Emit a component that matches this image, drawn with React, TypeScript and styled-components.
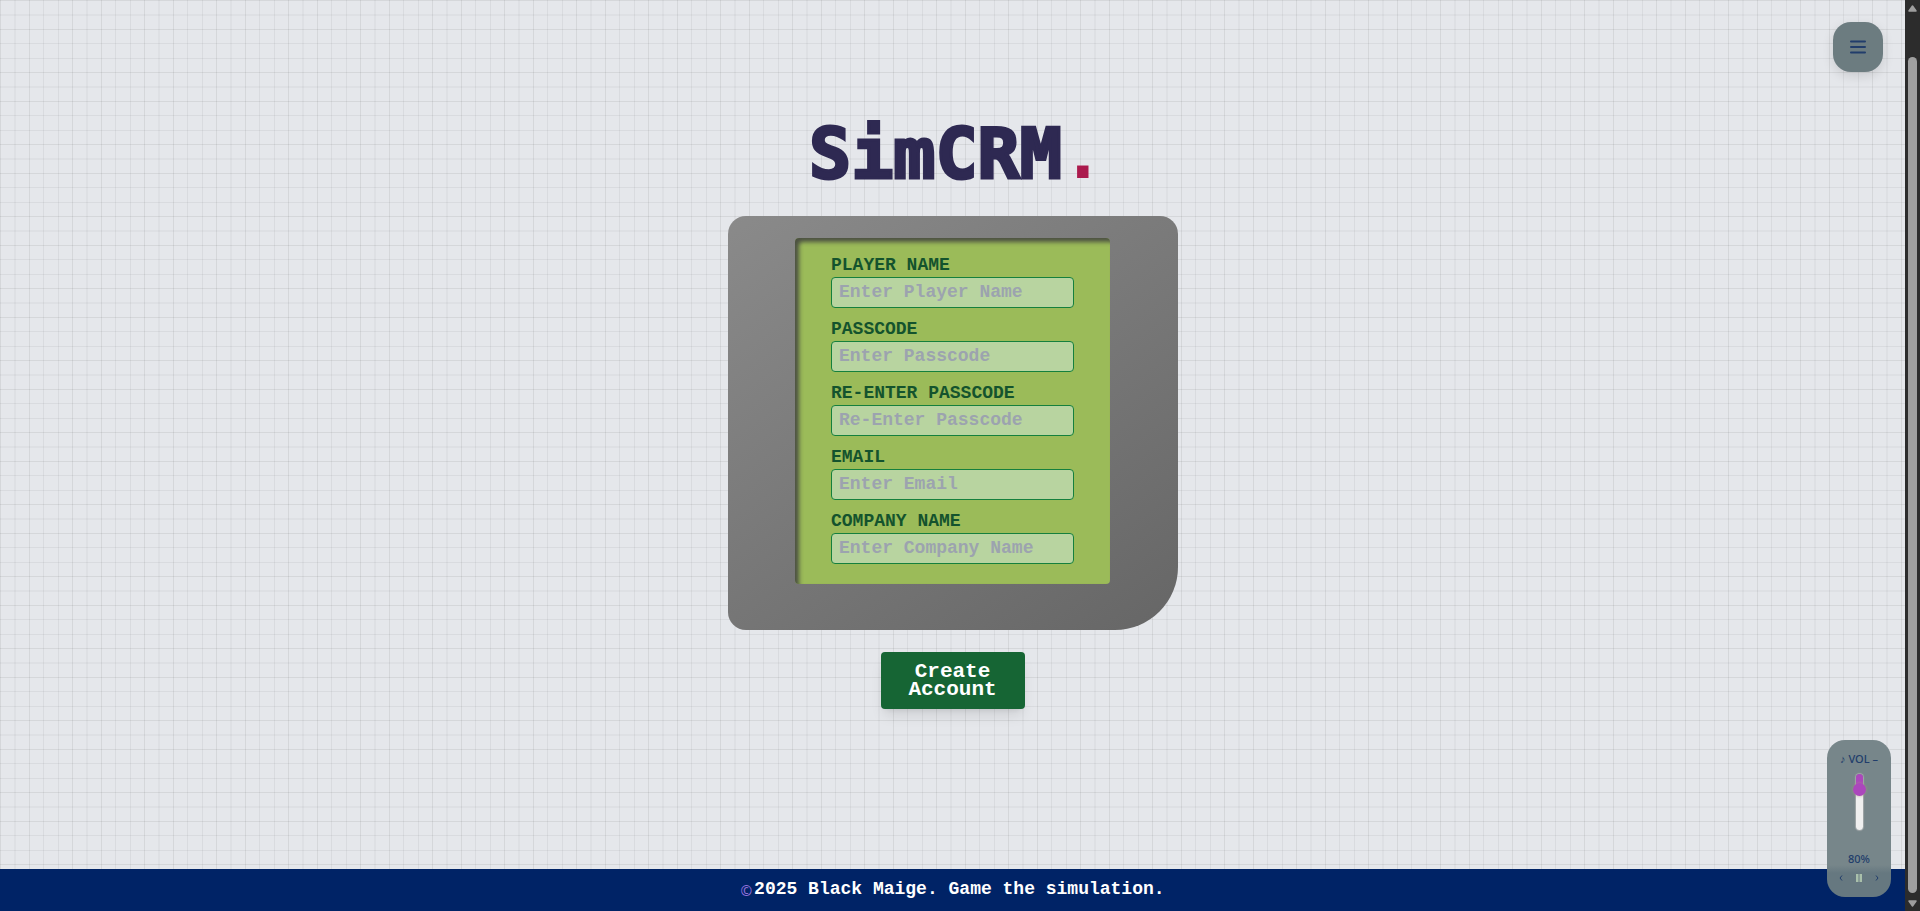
import React, { useState } from "react";
import styled, { createGlobalStyle } from "styled-components";

const GlobalStyle = createGlobalStyle`
  *, *::before, *::after { box-sizing: border-box; }
  body { margin: 0; background: #e5e7eb; }
  button, input { font: inherit; }
`;

const mono = `"Liberation Mono", "DejaVu Sans Mono", monospace`;
const sans = `"Noto Sans", "Open Sans", sans-serif`;

const line = "rgba(0, 0, 0, 0.07)";
const softLine = "rgba(0, 0, 0, 0.05)";
const gridStops = `
  ${line} 0 1px, transparent 1px 14px,
  rgba(0, 0, 0, 0.03) 14px 16px, transparent 16px 29px,
  ${line} 29px 30px, transparent 30px 43px,
  ${softLine} 43px 44px, transparent 44px 58px,
  ${softLine} 58px 59px, transparent 59px 72px`;

const Shell = styled.div`
  display: flex;
  height: 100vh;
`;

const Page = styled.div`
  position: relative;
  flex: 1;
  min-width: 0;
  display: flex;
  flex-direction: column;
  font-family: ${mono};
  background:
    linear-gradient(to right, ${gridStops}) 0 0 / 72px 72px,
    linear-gradient(to bottom, ${gridStops}) 0 0 / 72px 72px,
    #e5e7eb;
`;

const Main = styled.main`
  flex: 1;
  display: flex;
  flex-direction: column;
  align-items: center;
  padding-top: 116px;
`;

const Title = styled.h1`
  margin: 0;
  padding-left: 8px;
  font-family: "DejaVu Sans Mono", monospace;
  font-size: 70px;
  line-height: 76px;
  font-weight: 700;
  color: #2e2952;
  -webkit-text-stroke: 3px currentColor;
`;

const TitleDot = styled.span`
  color: #ab1a4d;
  -webkit-text-stroke: 0;
`;

const SignUpForm = styled.form`
  display: flex;
  flex-direction: column;
  align-items: center;
  gap: 22px;
  margin-top: 24px;
`;

const Console = styled.div`
  display: flex;
  justify-content: center;
  width: 450px;
  padding: 22px 0 46px;
  border-radius: 18px 18px 63px 18px;
  background: linear-gradient(145deg, #8a8a8a, #666666);
`;

const Screen = styled.div`
  display: flex;
  flex-direction: column;
  gap: 12px;
  width: 315px;
  padding: 18px 36px 20px;
  border-radius: 4px;
  background: #9bbb59;
  box-shadow: inset 4px 4px 4px rgba(62, 62, 62, 0.85);
`;

const Field = styled.div`
  display: flex;
  flex-direction: column;
  gap: 3px;
`;

const Label = styled.label`
  font-size: 18px;
  line-height: 18px;
  font-weight: 700;
  text-transform: uppercase;
  color: #14532d;
`;

const TextInput = styled.input`
  width: 100%;
  height: 31px;
  padding: 0 7px 2px;
  border: 1px solid #15803d;
  border-radius: 4px;
  outline: none;
  background: #b8d4a0;
  font-size: 18px;
  font-weight: 700;
  color: #14532d;
  &::placeholder { color: #9ca3af; opacity: 1; }
`;

const SubmitButton = styled.button`
  width: 144px;
  padding: 11px 20px 10px;
  border: 0;
  border-radius: 4px;
  background: #166534;
  color: #ffffff;
  font-size: 21px;
  line-height: 18px;
  font-weight: 700;
  box-shadow: 0 9px 14px -3px rgba(0, 0, 0, 0.1), 0 4px 6px -4px rgba(0, 0, 0, 0.1);
`;

const Footer = styled.footer`
  display: flex;
  align-items: center;
  justify-content: center;
  gap: 2px;
  height: 42px;
  padding-bottom: 2px;
  background: #002366;
  color: #ffffff;
  font-size: 18px;
  line-height: 18px;
  font-weight: 700;
`;

const Copyright = styled.span`
  padding-top: 4px;
  font-family: ${sans};
  font-size: 14px;
  font-weight: 400;
  color: #9370db;
`;

const MenuButton = styled.button`
  position: absolute;
  top: 22px;
  right: 22px;
  display: flex;
  align-items: center;
  justify-content: center;
  width: 50px;
  height: 50px;
  padding: 0;
  border: 0;
  border-radius: 18px;
  background: #6c7c80;
  box-shadow: 0 4px 12px rgba(0, 0, 0, 0.12);
`;

const Volume = styled.section`
  position: absolute;
  right: 14px;
  bottom: 14px;
  display: flex;
  flex-direction: column;
  align-items: center;
  width: 64px;
  height: 157px;
  padding: 12px 0 8px;
  border-radius: 18px;
  background: linear-gradient(to bottom, #77868a 0 125px, #667880 133px);
  font-family: ${sans};
  color: #213d6b;
`;

const VolumeHead = styled.label`
  display: flex;
  align-items: center;
  gap: 3px;
  font-size: 11px;
  line-height: 14px;
  font-weight: 500;
`;

const Slider = styled.input`
  appearance: none;
  writing-mode: vertical-lr;
  direction: rtl;
  width: 13px;
  height: 56px;
  margin: 8px 0 0;
  background: transparent;
  &::-webkit-slider-runnable-track {
    width: 7px;
    height: 56px;
    border-radius: 4px;
    background: linear-gradient(to bottom, #ab47bc 20%, #efefef 20%);
    box-shadow: 0 0 1px 1px rgba(190, 190, 190, 0.6);
  }
  &::-webkit-slider-thumb {
    appearance: none;
    width: 13px;
    height: 13px;
    margin-left: -3px;
    border-radius: 50%;
    background: #ab47bc;
    box-shadow: 0 0 3px rgba(171, 150, 130, 0.8);
  }
`;

const Percent = styled.output`
  margin-top: 22px;
  font-size: 11px;
  line-height: 14px;
  font-weight: 500;
`;

const Transport = styled.div`
  display: flex;
  align-items: center;
  justify-content: space-between;
  width: 42px;
  margin-top: 8px;
`;

const IconButton = styled.button`
  display: flex;
  padding: 0;
  border: 0;
  background: none;
  color: inherit;
`;

const Scrollbar = styled.div`
  display: flex;
  flex-direction: column;
  align-items: center;
  width: 15px;
  padding: 5px 0 4px;
  background: #2c2c2c;
`;

const ScrollThumb = styled.div`
  flex: 1;
  width: 9px;
  margin: 45px 0 7px;
  border-radius: 5px;
  background: #9f9f9f;
`;

const fields = [
  { id: "player", label: "Player Name", type: "text" },
  { id: "passcode", label: "Passcode", type: "password" },
  { id: "passcode2", label: "Re-Enter Passcode", type: "password" },
  { id: "email", label: "Email", type: "email" },
  { id: "company", label: "Company Name", type: "text" },
];

const Arrow = ({ down = false }: { down?: boolean }) => (
  <svg width="9" height="7" viewBox="0 0 9 7" aria-hidden="true">
    <path
      d={down ? "M1 1h7L4.5 6z" : "M1 6h7L4.5 1z"}
      fill="#9f9f9f"
      stroke="#9f9f9f"
      strokeWidth="1.5"
      strokeLinejoin="round"
    />
  </svg>
);

export default function App() {
  const [volume, setVolume] = useState(80);

  return (
    <>
      <GlobalStyle />
      <Shell>
        <Page>
          <Main>
            <Title>
              SimCRM<TitleDot>.</TitleDot>
            </Title>
            <SignUpForm onSubmit={(e) => e.preventDefault()}>
              <Console>
                <Screen>
                  {fields.map(({ id, label, type }) => (
                    <Field key={id}>
                      <Label htmlFor={id}>{label}</Label>
                      <TextInput
                        id={id}
                        type={type}
                        placeholder={label.startsWith("Re-") ? label : `Enter ${label}`}
                      />
                    </Field>
                  ))}
                </Screen>
              </Console>
              <SubmitButton type="submit">Create Account</SubmitButton>
            </SignUpForm>
          </Main>
          <Footer>
            <Copyright>©</Copyright>
            <span>2025 Black Maige. Game the simulation.</span>
          </Footer>
          <MenuButton type="button" aria-label="Menu">
            <svg width="18" height="14" viewBox="0 0 18 14" fill="none" stroke="#213d6b" strokeWidth="2" strokeLinecap="round">
              <path d="M2 1.5h14M2 7h14M2 12.5h14" />
            </svg>
          </MenuButton>
          <Volume aria-label="Music">
            <VolumeHead htmlFor="volume">
              <span>♪</span>
              <span>VOL</span>
              <span>–</span>
            </VolumeHead>
            <Slider
              id="volume"
              type="range"
              min={0}
              max={100}
              value={volume}
              onChange={(e) => setVolume(Number(e.target.value))}
            />
            <Percent htmlFor="volume">{volume}%</Percent>
            <Transport>
              <IconButton type="button" aria-label="Previous track">
                <svg width="6" height="8" viewBox="0 0 6 8" fill="none" stroke="currentColor">
                  <path d="M4 1.5L2 4l2 2.5" />
                </svg>
              </IconButton>
              <IconButton type="button" aria-label="Pause">
                <svg width="6" height="8" viewBox="0 0 6 8" fill="#a9c0ab">
                  <path d="M0 0h2.5v8H0zM3.5 0H6v8H3.5z" />
                </svg>
              </IconButton>
              <IconButton type="button" aria-label="Next track">
                <svg width="6" height="8" viewBox="0 0 6 8" fill="none" stroke="currentColor">
                  <path d="M2 1.5L4 4 2 6.5" />
                </svg>
              </IconButton>
            </Transport>
          </Volume>
        </Page>
        <Scrollbar aria-hidden="true">
          <Arrow />
          <ScrollThumb />
          <Arrow down />
        </Scrollbar>
      </Shell>
    </>
  );
}
